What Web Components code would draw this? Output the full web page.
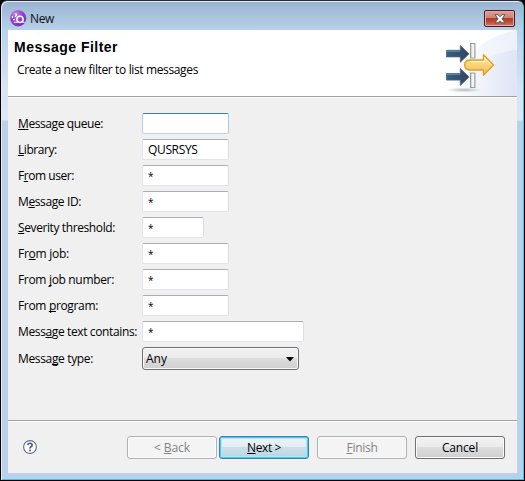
<!DOCTYPE html>
<html lang="en"><head><meta charset="utf-8"><title>New</title>
<style>
html,body{margin:0;width:525px;height:481px;overflow:hidden;background:#000}
body{font:12px/16px "Open Sans","Noto Sans",sans-serif;color:#000}
</style></head><body>
<dialog-window></dialog-window>
<script>
const define=(name,html,after)=>customElements.define(name,class extends HTMLElement{
  connectedCallback(){
    if(this.shadowRoot)return;
    this.attachShadow({mode:'open'}).innerHTML=html(this);
    if(after)after(this);
  }
});
// Text run whose tracking is adjusted so that it spans the given width.
define('fit-text',e=>`<style>:host{display:inline-block;white-space:pre}span{display:inline-block}u{text-underline-offset:1px;text-decoration-thickness:1px;text-decoration-skip-ink:none}</style><span>${e.getAttribute('text').replace(/</g,'&lt;').replace(/_(.)/,'<u>$1</u>')}</span>`,
e=>{const s=e.shadowRoot.querySelector('span'),w=+e.getAttribute('w'),n=s.textContent.length;
  if(n>1)s.style.letterSpacing=((w-s.getBoundingClientRect().width)/n)+'px';});

define('app-icon',()=>`<style>:host{display:block;width:17px;height:17px}svg{display:block}</style>
<svg width="17" height="17" viewBox="0 0 17 17"><defs><radialGradient id="g" cx=".35" cy=".25" r=".85"><stop offset="0" stop-color="#c07fe8"/><stop offset=".5" stop-color="#9440cc"/><stop offset="1" stop-color="#7a28b8"/></radialGradient></defs>
<circle cx="8.2" cy="8.3" r="8.1" fill="url(#g)"/><circle cx="10" cy="9.3" r="3.1" fill="none" stroke="#fff" stroke-width="1.5"/><path d="M7.6 12.2H3.8M12.6 12.2h2" stroke="#fff" stroke-width="1.1"/><path d="M2.4 6v2M3 9.6h1.8M4.6 4.2q1.8-1 2.2.6L5 6.8" fill="none" stroke="#fff" stroke-width="1.1"/></svg>`);

define('close-button',()=>`<style>:host{display:block;box-sizing:border-box;width:31px;height:17px;border:1px solid #4c1923;border-radius:2px;box-shadow:inset 0 0 0 1px #e5aaa2;background:linear-gradient(#dda096,#d08275 45%,#b83b27 50%,#b74430 65%,#d57867)}svg{display:block;margin:3px 0 0 9px}</style>
<svg width="12" height="10" viewBox="0 0 12 10"><path d="M1 .7h3L6 2.8 8 .7h3L8 4.8 11 8.8H8L6 6.8 4 8.8H1L4 4.8z" fill="#fff" stroke="#535666" stroke-width="1"/></svg>`);

define('title-bar',()=>`<style>:host{display:flex;box-sizing:border-box;padding:0 2px;align-items:flex-start;color:#111}app-icon{margin-top:9px}fit-text{margin:10px auto 0 3px}close-button{margin-top:9px}</style>
<app-icon></app-icon><fit-text text="New" w="24"></fit-text><close-button></close-button>`);

define('filter-icon',()=>`<style>:host{display:block;width:54px;height:54px}svg{display:block}</style>
<svg width="54" height="54" viewBox="0 0 54 54"><defs>
<linearGradient id="b" x1="0" x2="1"><stop stop-color="#2f628c"/><stop offset="1" stop-color="#36435c"/></linearGradient>
<linearGradient id="y" x2="0" y2="1"><stop stop-color="#fff0bd"/><stop offset=".5" stop-color="#f9d27b"/><stop offset="1" stop-color="#f3bd55"/></linearGradient>
<linearGradient id="p" x1="0" x2="1"><stop stop-color="#9db8b4"/><stop offset=".35" stop-color="#edf4e9"/><stop offset=".65" stop-color="#faf8ea"/><stop offset="1" stop-color="#d3bd8b"/></linearGradient>
<radialGradient id="s"><stop stop-color="#999" stop-opacity=".65"/><stop offset="1" stop-color="#999" stop-opacity="0"/></radialGradient></defs>
<ellipse cx="20" cy="50" rx="18" ry="2.5" fill="url(#s)"/>
<g stroke="#7f929c" stroke-width=".8"><rect x="26.5" y="3.4" width="4.5" height="14.6" fill="url(#p)"/><rect x="26.5" y="33" width="4.5" height="14.6" fill="url(#p)"/></g>
<path id="a" d="M2.5 10.3h13.8V5.4l8.8 8.4-8.8 8.4v-5.3H2.5z" fill="url(#b)" stroke="#52647d" stroke-width=".8"/><use href="#a" y="23.2"/>
<path d="M3 11.3h13M3 34.5h13" stroke="#6f9cba" stroke-width=".7"/>
<path d="M25.5 20h14v-5.3L49.5 25 39.5 35.3V30h-14q-4.8-.5-4.8-5t4.8-5z" fill="url(#y)" stroke="#e2a01e" stroke-width="1.4" stroke-linejoin="round"/>
<path d="M26 21.5h14.8v-3.3l6.7 6.8" fill="none" stroke="#fffbe5" stroke-width=".8"/></svg>`);

define('wizard-header',()=>`<style>:host{display:flex;justify-content:space-between;height:66px;background:#fff;border-bottom:1px solid #a0a0a0;box-shadow:0 1px #fff;position:relative}
.art{position:absolute;right:0;top:0}div{display:flex;flex-direction:column}.t{font:bold 14px/16px "Liberation Sans",sans-serif;margin:9px 0 0 6px}.d{margin:7px 0 0 9px}filter-icon{position:relative;margin:10px 19px 0 0}</style>
<svg class="art" width="110" height="66"><defs><linearGradient id="q" x1="0" x2="1"><stop stop-color="#fff"/><stop offset=".5" stop-color="#f0f3fb"/><stop offset="1" stop-color="#dfe4f6"/></linearGradient><linearGradient id="r" x1="0" x2="1"><stop stop-color="#fff"/><stop offset="1" stop-color="#edf0fa"/></linearGradient></defs><path d="M36 66Q62 8 110 0V66z" fill="url(#r)"/><path d="M40 66Q66 24 110 20V66z" fill="url(#q)"/></svg>
<div><fit-text class="t" text="Message Filter" w="104"></fit-text><fit-text class="d" text="Create a new filter to list messages" w="181"></fit-text></div><filter-icon></filter-icon>`);

define('text-field',e=>`<style>:host{display:block;box-sizing:border-box;width:${e.getAttribute('w')}px;height:21px;background:#fff;border:1px solid #e2e3ea;border-top-color:#abadb3;border-right-color:#dbdfe6;border-radius:2px;padding:2px 5px 0}:host([wild]){font-size:10px}:host([focused]){border-color:#3d7bad #a4c9e3 #b7d9ed #b5cfe7}</style><slot></slot>`);

define('combo-box',()=>`<style>:host{display:flex;box-sizing:border-box;width:157px;height:23px;border:1px solid #707070;border-radius:3px;box-shadow:inset 0 0 0 1px #f8f8f8;background:linear-gradient(#f2f2f2,#ebebeb 50%,#ddd 50%,#cfcfcf);padding:3px 4px 0 3px;justify-content:space-between}svg{margin-top:6px}</style><slot></slot><svg width="8" height="5"><path d="M0 0h8L4 4.5z"/></svg>`);

define('form-row',e=>`<style>:host{display:flex;height:26px}fit-text{width:124px;flex:none;margin-top:3px}:host([combo]) fit-text{margin-top:4px}</style><fit-text text="${e.getAttribute('label')}" w="${e.getAttribute('lw')}"></fit-text><slot></slot>`);

define('push-button',()=>`<style>:host{display:block;box-sizing:border-box;width:90px;height:23px;border:1px solid #707070;border-radius:3px;box-shadow:inset 0 0 0 1px #fafafa;background:linear-gradient(#f2f2f2,#ebebeb 48%,#ddd 50%,#cfcfcf);text-align:center;padding-top:3px}
:host([disabled]){color:#838383;border-color:#adb2b5;background:#f4f4f4}:host([primary]){border-color:#3c7fb1;box-shadow:inset 0 0 0 1px #42cbf5,inset 0 0 0 2px #b9e6f6;background:linear-gradient(#edf4f7,#e2edf2 48%,#cbdfe8 50%,#bdd5e1)}</style><slot></slot>`);

define('help-icon',()=>`<style>:host{display:block;width:14px;height:14px;box-sizing:border-box}svg{display:block}</style><svg width="14" height="14"><circle cx="7" cy="7" r="6.4" fill="#fff" stroke="#5d7290" stroke-width="1.1"/><path d="M4.8 5.2Q5 3.2 7 3.2t2.2 1.9Q9.2 6.2 8 6.8 7 7.3 7 8.6" fill="none" stroke="#44597c" stroke-width="1.6"/><rect x="6.2" y="9.6" width="1.7" height="1.7" fill="#44597c"/></svg>`);

define('button-bar',()=>`<style>:host{display:flex;height:37px;padding:15px 12px 0 15px;border-top:1px solid #a0a0a0;box-shadow:inset 0 1px #fff}help-icon{margin:4px auto 0 0}.n{margin-left:2px}.g{margin-left:8px}</style>
<help-icon></help-icon><push-button disabled><fit-text text="&lt; _Back" w="36"></fit-text></push-button><push-button class="n" primary><fit-text text="_Next &gt;" w="34"></fit-text></push-button><push-button class="g" disabled><fit-text text="_Finish" w="31"></fit-text></push-button><push-button class="g"><fit-text text="Cancel" w="36"></fit-text></push-button>`);

const rows=[['_Message queue:',85,'',87],['_Library:',38.7,'QUSRSYS',87,49.5],['F_rom user:',56,'*',87,6],['M_essage ID:',63,'*',87,6],['_Severity threshold:',97,'*',62,6],['Fr_om job:',51,'*',87,6],['From _job number:',96,'*',87,6],['From _program:',80,'*',87,6],['Mess_age text contains:',119,'*',162,6]];
define('filter-form',()=>`<style>:host{display:block;flex:1;padding:16px 0 0 10px}</style>${rows.map(([l,lw,v,w,vw],i)=>`<form-row label="${l}" lw="${lw}"><text-field w="${w}"${i?'':' focused'}${v==='*'?' wild':''}>${v?`<fit-text text="${v}" w="${vw}"></fit-text>`:''}</text-field></form-row>`).join('')}<form-row combo label="Messa_ge type:" lw="75"><combo-box><fit-text text="Any" w="21"></fit-text></combo-box></form-row>`);

define('dialog-window',()=>`<style>:host{display:flex;flex-direction:column;box-sizing:border-box;width:525px;height:481px;border:1px solid #000;border-top-color:#2b2b30;border-radius:7px 7px 0 0;box-shadow:inset 1px 1px #e3eefa,inset -1px -1px #35c8e4;padding:0 7px 7px;background:linear-gradient(#98b3d1 0,#b9d1ea 29px,#d6e3f3 85px,#dce8f5 119px,#b9d1ea 120px)}
title-bar{height:29px;flex:none}main{display:flex;flex-direction:column;flex:1;background:#f0f0f0;min-height:0}</style>
<title-bar></title-bar><main><wizard-header></wizard-header><filter-form></filter-form><button-bar></button-bar></main>`);
</script></body></html>
